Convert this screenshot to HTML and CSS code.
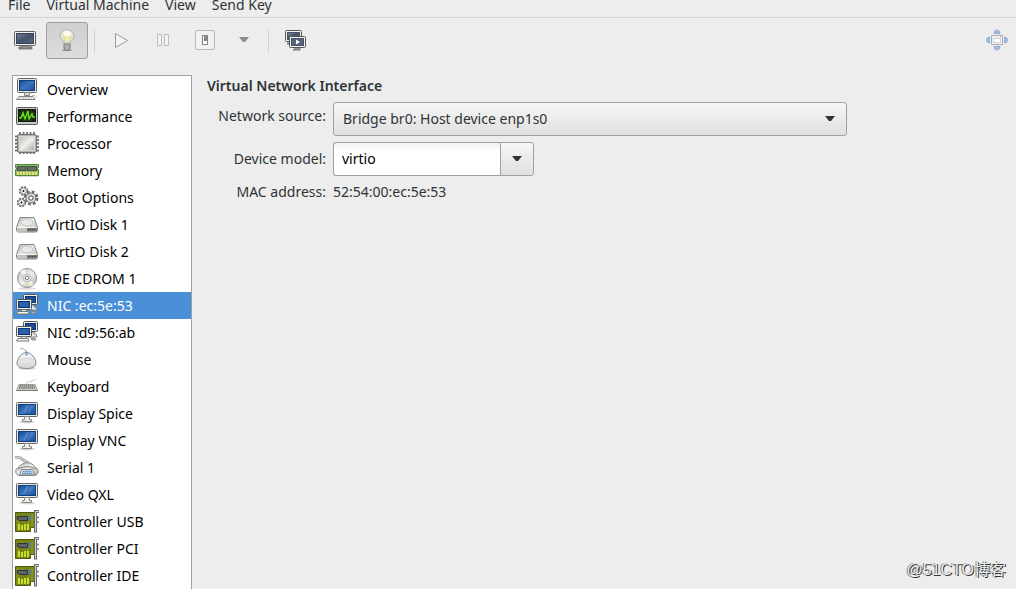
FILE: index.html
```html
<!DOCTYPE html>
<html lang="en">
<head>
<meta charset="utf-8">
<title>Virtual Machine</title>
<link rel="stylesheet" href="styles.css">
</head>
<body>
<svg class="defs" aria-hidden="true">
  <defs>
    <linearGradient id="blue" x1="0" y1="0" x2="1" y2="1"><stop offset="0" stop-color="#164a94"/><stop offset=".5" stop-color="#3a75bf"/><stop offset="1" stop-color="#1b4b93"/></linearGradient>
    <linearGradient id="slate" x1="0" y1="0" x2="1" y2="1"><stop offset="0" stop-color="#77849a"/><stop offset=".5" stop-color="#44526b"/><stop offset="1" stop-color="#59677f"/></linearGradient>
    <linearGradient id="metal" x1="0" y1="0" x2="1" y2="1"><stop offset="0" stop-color="#bcbcba"/><stop offset=".5" stop-color="#efefed"/><stop offset="1" stop-color="#aaaaa8"/></linearGradient>
    <linearGradient id="silver" x1="0" y1="0" x2="0" y2="1"><stop offset="0" stop-color="#fafafa"/><stop offset="1" stop-color="#d2d3d0"/></linearGradient>
    <radialGradient id="glow" cx=".5" cy=".45"><stop offset="0" stop-color="#fffcd8"/><stop offset=".5" stop-color="#f3eeb4"/><stop offset=".8" stop-color="#e2e2dc"/><stop offset="1" stop-color="#d4d4d0"/></radialGradient>
  </defs>
  <symbol id="computer" viewBox="0 0 24 24">
    <rect x="2.500" y=".5" width="19" height="14" rx="1" fill="#e8e8e4" stroke="#62645f"/>
    <rect x="4.500" y="2.500" width="15" height="10" fill="url(#blue)" stroke="#143e7a"/>
    <path d="M9.500 14.500h5v3h-5z" fill="#d9dad6" stroke="#858681"/>
    <path d="M4 18.500h14l2 3H1.500z" fill="#f1f1ee" stroke="#858681"/>
    <path d="M4 20h13" stroke="#b4b5af" stroke-dasharray="2 1"/>
    <path d="M17 17.500h3l2 2" fill="none" stroke="#c0c1bd"/>
  </symbol>
  <symbol id="display" viewBox="0 0 24 24">
    <ellipse cx="12" cy="20" rx="8" ry="1.500" fill="#d8d8d8"/>
    <rect x="1.500" y=".5" width="21" height="14" rx="1" fill="#e8e8e4" stroke="#62645f"/>
    <rect x="3.500" y="2.500" width="17" height="10" fill="url(#blue)" stroke="#123f80"/>
    <path d="M8 11l4-8h2l-4 8zM13 11l4-8h1l-4 8z" fill="#7aa6df" opacity=".45"/>
    <path d="M9.500 14.500h5v3h2v2h-9v-2h2z" fill="#eeeeeb" stroke="#858681"/>
  </symbol>
  <symbol id="performance" viewBox="0 0 24 24">
    <rect x="1.500" y="2.500" width="21" height="17" rx="1" fill="#c9cac6" stroke="#595b56"/>
    <rect x="3.500" y="4.500" width="17" height="12" fill="#17280e" stroke="#10180b"/>
    <path d="M4 8h16M4 12h16M8 5v11M12 5v11M16 5v11" stroke="#335b20" stroke-width=".6"/>
    <path d="M4 13h2l2-5 2 6 3-8 1 8 3-5 1 3h2" fill="none" stroke="#69e51c" stroke-width="1.400"/>
  </symbol>
  <symbol id="processor" viewBox="0 0 24 24">
    <path d="M5 0v22M8.500 0v22M12 0v22M15.500 0v22M19 0v22M0 4.500h24M0 8h24M0 11.500h24M0 15h24M0 18.500h24" stroke="#777874" stroke-width="1.900"/>
    <rect x="2.500" y="2.500" width="19" height="18" rx="2" fill="#b3b4b0" stroke="#73746f"/>
    <rect x="4.500" y="4.500" width="15" height="14" fill="url(#metal)" stroke="#d8d8d5"/>
  </symbol>
  <symbol id="memory" viewBox="0 0 24 24">
    <path d="M.5 5.500h23v3h-1v2h1v6H.5v-6h1v-2h-1z" fill="#8fbf6b" stroke="#4a8a3c"/>
    <path d="M2.500 7.500h8v4h-8zM12.500 7.500h9v4h-9z" fill="#6b6d69" stroke="#484a46"/>
    <path d="M11.500 5v7" stroke="#2fa52d"/>
    <path d="M2 14.500h21" stroke="#efdc6b" stroke-width="3" stroke-dasharray="2 1"/>
    <path d="M2 17.500h21" stroke="#d5d5d5"/>
  </symbol>
  <symbol id="gears" viewBox="0 0 24 24">
    <g fill="none" stroke="#6b6d68">
      <circle cx="16" cy="12" r="6" stroke-width="3" stroke-dasharray="2.600 2.110"/>
      <circle cx="16" cy="12" r="5" fill="#dddedb"/>
      <circle cx="16" cy="12" r="2.200" fill="#fff" stroke="#444"/>
      <circle cx="8.500" cy="5" r="3.800" stroke-width="2" stroke-dasharray="2 1"/>
      <circle cx="8.500" cy="5" r="3" fill="#eeeeec" stroke="#999"/>
      <circle cx="6.500" cy="16.500" r="3.800" stroke-width="2" stroke-dasharray="2 1"/>
      <circle cx="6.500" cy="16.500" r="3" fill="#eeeeec" stroke="#999"/>
    </g>
    <path d="M8 4.500h1v1H8zM6 16h1v1H6z" fill="#222" stroke="#222"/>
  </symbol>
  <symbol id="disk" viewBox="0 0 24 24">
    <path d="M5 4.500h14l3.500 10v3l-1 1.500H2.500l-1-1.500v-3z" fill="url(#metal)" stroke="#858681"/>
    <ellipse cx="12" cy="9.500" rx="6" ry="3.500" fill="#e9e9e7" stroke="#c2c2bf"/>
    <path d="M2 14.500h20v4H2z" fill="#c3c4c1"/>
    <path d="M12 14.500h10v4H12z" fill="#777874"/>
    <path d="M13 16.500h8" stroke="#444" stroke-dasharray="1 1"/>
    <path d="M2 14.500h20" stroke="#f4f4f2"/>
  </symbol>
  <symbol id="cdrom" viewBox="0 0 24 24">
    <ellipse cx="12" cy="21.500" rx="9" ry="1.500" fill="#ddd"/>
    <circle cx="12" cy="11" r="9.500" fill="url(#metal)" stroke="#90918d"/>
    <path d="M12 11L5 4.500a9 9 0 0 1 5-2zM12 11l7 6a9 9 0 0 1-5 2.500z" fill="#fff" opacity=".8"/>
    <path d="M12 11l5 7-3 1z" fill="#eee8b3"/>
    <circle cx="12" cy="11" r="4" fill="#dedfdc" stroke="#bbb"/>
    <circle cx="12" cy="11" r="1.700" fill="#fff" stroke="#858681"/>
  </symbol>
  <symbol id="network" viewBox="0 0 24 24">
    <path d="M14 11h5v2h2l1 3h-9z" fill="#e8e8e4" stroke="#858681"/>
    <rect x="8.500" y=".5" width="14" height="10" rx="1" fill="#eeeeea" stroke="#555753"/>
    <rect x="10.500" y="2.500" width="10" height="6" fill="#194c97" stroke="#0d3472"/>
    <rect x="1.500" y="5.500" width="15" height="10" rx="1" fill="#eeeeea" stroke="#555753"/>
    <rect x="3.500" y="7.500" width="11" height="6" fill="#2b61ad" stroke="#0d3472"/>
    <path d="M6.500 15.500h5v2h-5z" fill="#ddd" stroke="#777"/>
    <path d="M3 17.500h10l1 2.500H1.500z" fill="#f3f3f0" stroke="#777973"/>
    <path d="M16 17.500h4l1 1.500h-4z" fill="#eee" stroke="#858681"/>
  </symbol>
  <symbol id="mouse" viewBox="0 0 24 24">
    <ellipse cx="12" cy="20.500" rx="9" ry="1.500" fill="#ddd"/>
    <path d="M5 1c3-2 4 2 6 1v3" fill="none" stroke="#a6a7a3"/>
    <path d="M11.500 4.500c4.500 0 9.500 6 9.500 10.500 0 4-4 5.500-9.500 5.500S2 19 2 15C2 10.500 7 4.500 11.500 4.500z" fill="url(#silver)" stroke="#858681"/>
    <path d="M4 12c4-2 12-2 15 0" fill="none" stroke="#d3d4d1"/>
    <path d="M11.500 3.500v4" stroke="#659bd9" stroke-width="2"/>
  </symbol>
  <symbol id="keyboard" viewBox="0 0 24 24">
    <path d="M12 9c-1-3 3-2 5-3s3-1 4-2" fill="none" stroke="#c5c6c3"/>
    <path d="M4 9.500h16l2.500 6H1.500z" fill="#d2d3cf" stroke="#999a95"/>
    <path d="M4.500 11h15M4 13h16" stroke="#6b6d68" stroke-width="1.300" stroke-dasharray="1.500 .6"/>
    <path d="M1.500 15.500h21" stroke="#777973"/>
  </symbol>
  <symbol id="serial" viewBox="0 0 24 24">
    <path d="M0 1.500c7-1 6 2 9 3 3 1 4 2 5 4" fill="none" stroke="#a5a6a2" stroke-width="3"/>
    <path d="M0 1.500c7-1 6 2 9 3 3 1 4 2 5 4" fill="none" stroke="#dcddda"/>
    <path d="M6 9c4-3 9-3 12 0l5 4.500c1 3-1 6-4 6H5c-3 0-5-2.500-4-6z" fill="url(#metal)" stroke="#858681"/>
    <path d="M3 13c6-3 12-3 18 0" fill="none" stroke="#777973"/>
    <path d="M6.500 13.500h11l2 5.500h-15z" fill="#e3e8ee" stroke="#858681"/>
    <path d="M8 15.500h9M7 17.500h11" stroke="#477fc4" stroke-width="1.300" stroke-dasharray="1.500 .7"/>
  </symbol>
  <symbol id="controller" viewBox="0 0 24 24">
    <path d="M.5 2.500h19v15h-4v4H.5z" fill="#788317" stroke="#4f5a0d"/>
    <path d="M3 4v16M17 4v13M7 4v4M13 12v7" stroke="#96a526"/>
    <path d="M4 14v6M7 15v5M10 14v6M13 14v6" stroke="#d0e72c" stroke-width="1.800"/>
    <path d="M2.500 6.500h10v4h-8l-2-1z" fill="#5b626b" stroke="#30343a"/>
    <path d="M13 6.500h4M13 9.500h4" stroke="#5681a7" stroke-width="1.700"/>
    <path d="M24 1.500h-3.500v21" fill="none" stroke="#686a66" stroke-width="3"/>
    <path d="M24 1.500h-3.500v20" fill="none" stroke="#d1d2cf"/>
    <path d="M21.500 7.500H24M21.500 12H24" stroke="#858681" stroke-width="1.500"/>
  </symbol>
</svg>

<nav class="menubar" aria-label="Main menu">
  <button class="menu">File</button>
  <button class="menu">Virtual Machine</button>
  <button class="menu">View</button>
  <button class="menu">Send Key</button>
</nav>

<div class="toolbar" role="toolbar" aria-label="Machine controls">
  <button class="tool" aria-label="Show console">
    <svg class="icon" viewBox="0 0 24 24"><path d="M9 17h7v2h3v2H6v-2h3z" fill="#8d8e8b" stroke="#555753" stroke-width=".7"/><rect x="1.500" y="3.500" width="21" height="14" rx="1" fill="#f2f2f0" stroke="#5d5f5b"/><rect x="3.500" y="5.500" width="17" height="10" fill="url(#slate)" stroke="#354158"/></svg>
  </button>
  <button class="tool active" aria-label="Show details" aria-pressed="true">
    <svg class="icon" viewBox="0 0 24 24"><ellipse cx="12" cy="22" rx="5" ry="1" fill="#999"/><path d="M9 16c0-3-4-4-4-8a7 6.500 0 0 1 14 0C19 12 15 13 15 16z" fill="url(#glow)" stroke="#b8b9b4"/><path d="M10.500 15l-2-6 2 1 1.500-1 1.500 1 2-1-2 6" fill="none" stroke="#d9cf7d" stroke-width=".8"/><path d="M8.500 4q3.500-2 7 0v3h-7z" fill="#fff" opacity=".75"/><path d="M9 16h6v4l-1 2h-4l-1-2z" fill="#d5d6d3" stroke="#777973"/><path d="M9 18h6M9 20h6" stroke="#888"/></svg>
  </button>
  <span class="separator"></span>
  <button class="tool" aria-label="Run">
    <svg class="icon" viewBox="0 0 24 24"><path d="M6.500 5.500v14l12-7z" fill="#f4f4f3" stroke="#9a9b98" stroke-linejoin="round"/></svg>
  </button>
  <button class="tool" aria-label="Pause">
    <svg class="icon" viewBox="0 0 24 24"><path d="M6.500 6.500h4v11h-4zM13.500 6.500h4v11h-4z" fill="#f4f4f3" stroke="#bbbcba"/></svg>
  </button>
  <button class="tool" aria-label="Shut down">
    <svg class="icon" viewBox="0 0 24 24"><rect x="2.500" y="2.500" width="19" height="19" rx="1.500" fill="#f2f2f1" stroke="#b9bab8"/><rect x="9.500" y="7.500" width="5" height="9" fill="#fff" stroke="#888986"/><path d="M11 8h3v5h-3z" fill="#858683"/></svg>
  </button>
  <button class="tool drop" aria-label="Shutdown options">
    <svg class="arrow muted" viewBox="0 0 10 6"><path d="M0 0h10L6 5H4z"/></svg>
  </button>
  <span class="separator"></span>
  <button class="tool" aria-label="Snapshots">
    <svg class="icon" viewBox="0 0 24 24"><rect x="2.500" y="2.500" width="16" height="11" rx="1" fill="#f2f2f0" stroke="#555753"/><rect x="4.500" y="4.500" width="12" height="7" fill="url(#slate)" stroke="#46536a"/><path d="M4 15.500h3" stroke="#777" stroke-width="2"/><path d="M12 19h5v3h-7l2-1z" fill="#999" stroke="#777"/><rect x="6.500" y="8.500" width="16" height="11" rx="1" fill="#f2f2f0" stroke="#555753"/><rect x="8.500" y="10.500" width="12" height="7" fill="#56657c" stroke="#46536a"/><path d="M13 11.500v5l4-2.500z" fill="#fff"/></svg>
  </button>
  <button class="tool fullscreen" aria-label="Fullscreen">
    <svg class="icon" viewBox="0 0 24 24"><g fill="#a9bfdf" stroke="#8fa9d0"><path d="M9 5.500q0-3 3-3.500 3 .5 3 3.500zM9 18.500q0 3 3 3.500 3-.5 3-3.500zM4.500 9Q1.500 9 1.500 12t3 3zM19.500 9q3 0 3 3t-3 3z"/></g><rect x="6.500" y="7.500" width="11" height="9" fill="#f2f2f0" stroke="#acada9"/><rect x="8.500" y="10.500" width="7" height="4" fill="#fff" stroke="#d0d0ce"/><path d="M15 9h1" stroke="#aaa"/></svg>
  </button>
</div>

<div class="workspace">
  <ul class="devices">
    <li><button class="device"><svg class="icon"><use href="#computer"/></svg>Overview</button></li>
    <li><button class="device"><svg class="icon"><use href="#performance"/></svg>Performance</button></li>
    <li><button class="device"><svg class="icon"><use href="#processor"/></svg>Processor</button></li>
    <li><button class="device"><svg class="icon"><use href="#memory"/></svg>Memory</button></li>
    <li><button class="device"><svg class="icon"><use href="#gears"/></svg>Boot Options</button></li>
    <li><button class="device"><svg class="icon"><use href="#disk"/></svg>VirtIO Disk 1</button></li>
    <li><button class="device"><svg class="icon"><use href="#disk"/></svg>VirtIO Disk 2</button></li>
    <li><button class="device"><svg class="icon"><use href="#cdrom"/></svg>IDE CDROM 1</button></li>
    <li><button class="device selected" aria-current="true"><svg class="icon"><use href="#network"/></svg>NIC :ec:5e:53</button></li>
    <li><button class="device"><svg class="icon"><use href="#network"/></svg>NIC :d9:56:ab</button></li>
    <li><button class="device"><svg class="icon"><use href="#mouse"/></svg>Mouse</button></li>
    <li><button class="device"><svg class="icon"><use href="#keyboard"/></svg>Keyboard</button></li>
    <li><button class="device"><svg class="icon"><use href="#display"/></svg>Display Spice</button></li>
    <li><button class="device"><svg class="icon"><use href="#display"/></svg>Display VNC</button></li>
    <li><button class="device"><svg class="icon"><use href="#serial"/></svg>Serial 1</button></li>
    <li><button class="device"><svg class="icon"><use href="#display"/></svg>Video QXL</button></li>
    <li><button class="device"><svg class="icon"><use href="#controller"/></svg>Controller USB</button></li>
    <li><button class="device"><svg class="icon"><use href="#controller"/></svg>Controller PCI</button></li>
    <li><button class="device"><svg class="icon"><use href="#controller"/></svg>Controller IDE</button></li>
  </ul>

  <main class="details">
    <h1 class="title">Virtual Network Interface</h1>
    <form class="form">
      <label class="label top" for="source">Network source:</label>
      <div class="select-box">
        <select class="select" id="source"><option>Bridge br0: Host device enp1s0</option></select>
        <svg class="arrow select-arrow" viewBox="0 0 10 6"><path d="M0 0h10L6 5H4z"/></svg>
      </div>
      <label class="label" for="model">Device model:</label>
      <div class="combo">
        <input class="combo-input" id="model" type="text" value="virtio">
        <button class="combo-button" type="button" aria-label="Choose device model"><svg class="arrow" viewBox="0 0 10 6"><path d="M0 0h10L6 5H4z"/></svg></button>
      </div>
      <span class="label">MAC address:</span>
      <output class="value">52:54:00:ec:5e:53</output>
    </form>
  </main>
</div>
<div class="watermark">@51CTO博客</div>
</body>
</html>
```
FILE: styles.css
```css
* { box-sizing: border-box; }

body {
  display: flex;
  flex-direction: column;
  height: 100vh;
  margin: 0;
  overflow: hidden;
  background: #ededed;
  color: #2e3436;
  font: 14px/20px "Noto Sans", "Open Sans", sans-serif;
}

button, input, select { margin: 0; color: inherit; font: inherit; }

.defs { position: absolute; width: 0; height: 0; }

.icon { flex: none; width: 24px; height: 24px; }

.menubar {
  display: flex;
  flex: none;
  align-items: flex-end;
  gap: 16px;
  height: 18px;
  padding: 0 8px 2px;
  border-bottom: 1px solid #d3d3d3;
}

.menu { flex: none; padding: 0; border: 0; background: none; }

.toolbar {
  display: flex;
  flex: none;
  align-items: center;
  padding: 4px 0 0 4px;
}

.tool {
  display: flex;
  align-items: center;
  justify-content: center;
  width: 42px;
  height: 37px;
  padding: 0 0 1px;
  border: 1px solid transparent;
  border-radius: 3px;
  background: none;
}

.tool.active {
  border-color: #a0a0a0;
  background: linear-gradient(#cfcfcf, #dcdcdc);
}

.tool.drop { width: 36px; }
.tool.fullscreen { width: 38px; margin-left: auto; }

.separator { width: 1px; height: 24px; margin: 0 5px 0 6px; background: #d2d2d2; }

.arrow { width: 10px; height: 6px; fill: #2e3436; }
.arrow.muted { fill: #8a8d8e; }

.workspace {
  display: flex;
  flex: 1;
  gap: 15px;
  min-height: 0;
  padding: 16px 12px 0;
}

.devices {
  flex: none;
  width: 180px;
  margin: 0;
  padding: 0;
  overflow: hidden;
  border: 1px solid #a0a0a0;
  border-bottom: 0;
  background: #fff;
  color: #000;
  list-style: none;
}

.device {
  display: flex;
  align-items: center;
  gap: 8px;
  width: 100%;
  height: 27px;
  padding: 0 2px;
  border: 0;
  background: none;
  text-align: left;
}

.device.selected { background: #4a90d9; color: #fff; }

.details { flex: 1; min-width: 0; }

.title { margin: 0; font-size: 14px; font-weight: 600; line-height: 22px; }

.form {
  display: grid;
  grid-template-columns: 119px minmax(0, 514px);
  gap: 6px 7px;
  align-items: center;
  margin-top: 5px;
}

.label { text-align: right; }
.label.top { align-self: start; padding-top: 4px; }

.select-box { position: relative; }

.select {
  display: block;
  width: 100%;
  height: 34px;
  padding: 0 9px;
  border: 1px solid #a0a0a0;
  border-radius: 3px;
  background: linear-gradient(#f7f7f7, #dfdfdf);
  appearance: none;
}

.select-arrow {
  position: absolute;
  top: 14px;
  right: 12px;
  pointer-events: none;
}

.combo { display: flex; width: 201px; height: 34px; }

.combo-input {
  flex: 1;
  min-width: 0;
  padding: 0 8px;
  border: 1px solid #a0a0a0;
  border-right: 0;
  border-radius: 3px 0 0 3px;
  background: linear-gradient(#f1f1f1, #fff 8px);
  color: #000;
}

.combo-button {
  display: flex;
  align-items: center;
  justify-content: center;
  width: 34px;
  padding: 0;
  border: 1px solid #a0a0a0;
  border-radius: 0 3px 3px 0;
  background: linear-gradient(#f7f7f7, #dfdfdf);
}

.watermark {
  position: absolute;
  right: 10px;
  bottom: 7px;
  color: #eee;
  font: 16px/24px "Liberation Sans", "Noto Sans CJK SC", sans-serif;
  text-shadow: 1px 1px 0 #333, -1px 0 0 #777;
}
```
